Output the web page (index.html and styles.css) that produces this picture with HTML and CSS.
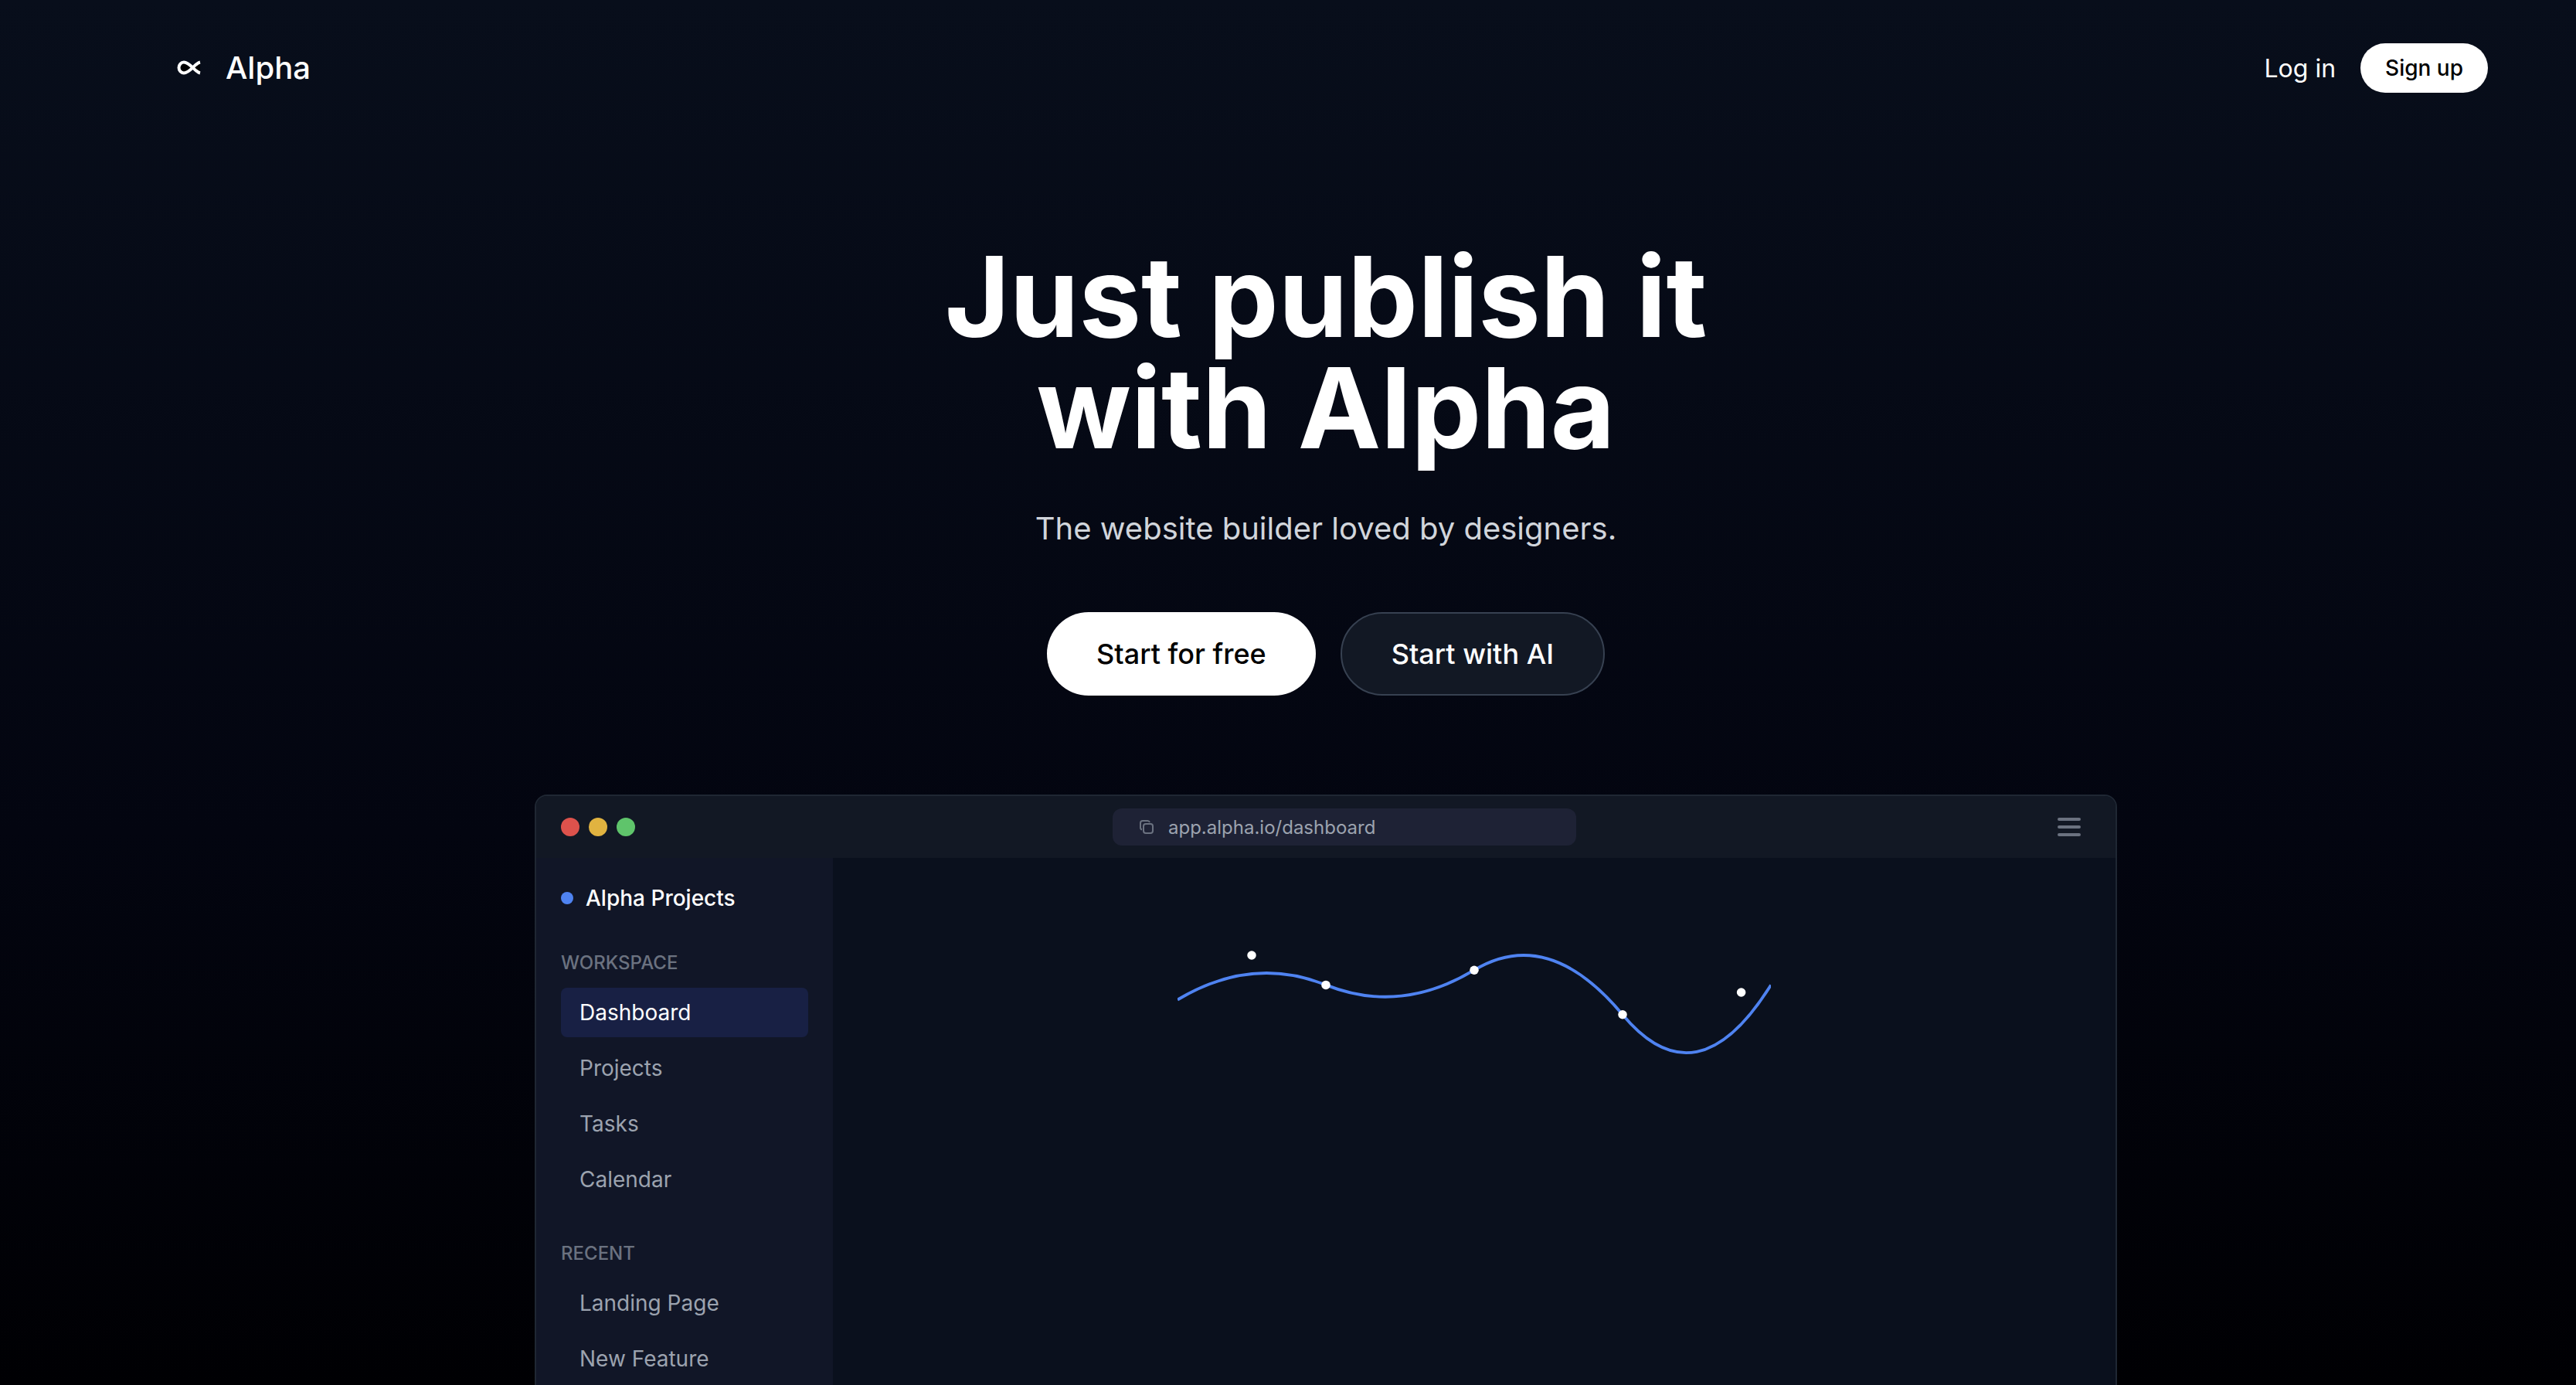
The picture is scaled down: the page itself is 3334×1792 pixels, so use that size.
FILE: index.html
```html
<!DOCTYPE html>
<html lang="en">
<head>
<meta charset="utf-8">
<title>Alpha</title>
<meta name="viewport" content="width=device-width, initial-scale=1">
<link rel="stylesheet" href="styles.css">
</head>
<body>
<div class="page">
  <header class="header">
    <a class="brand" href="#">
      <svg class="brand-icon" viewBox="0 0 64 64" aria-hidden="true"><path d="M47 24.500C40 26 34 38.500 26 38.500A6.500 7 0 0 1 26 24.500C34 24.500 40 37 47 38.500" fill="#000" stroke="#fff" stroke-width="4"/></svg>
      <span>Alpha</span>
    </a>
    <nav class="account">
      <a class="login" href="#">Log in</a>
      <button class="signup" type="button">Sign up</button>
    </nav>
  </header>
  <main>
    <section class="hero">
      <h1>Just publish it<br>with Alpha</h1>
      <p>The website builder loved by designers.</p>
      <div class="actions">
        <button class="action action-primary" type="button">Start for free</button>
        <button class="action action-secondary" type="button">Start with AI</button>
      </div>
    </section>
    <section class="window" aria-label="Dashboard preview">
      <div class="titlebar">
        <div class="lights"><span class="light red"></span><span class="light yellow"></span><span class="light green"></span></div>
        <div class="address">
          <svg class="copy-icon" viewBox="0 0 24 24" aria-hidden="true"><path d="M6 15.500a3 3 0 0 1-2-3V7a3 3 0 0 1 3-3h6a3 3 0 0 1 3 2"/><rect x="8" y="8" width="12" height="12" rx="3"/></svg>
          <span>app.alpha.io/dashboard</span>
        </div>
        <button class="menu" type="button" aria-label="Menu"><svg viewBox="0 0 40 40" aria-hidden="true"><path d="M7 10h26M7 20h26M7 30h26"/></svg></button>
      </div>
      <div class="workspace">
        <aside class="sidebar">
          <div class="project"><span class="project-dot"></span>Alpha Projects</div>
          <nav class="group">
            <h2>WORKSPACE</h2>
            <a class="item active" href="#">Dashboard</a>
            <a class="item" href="#">Projects</a>
            <a class="item" href="#">Tasks</a>
            <a class="item" href="#">Calendar</a>
          </nav>
          <nav class="group">
            <h2>RECENT</h2>
            <a class="item" href="#">Landing Page</a>
            <a class="item" href="#">New Feature</a>
          </nav>
        </aside>
        <div class="canvas">
          <svg class="chart" viewBox="0 0 400 200" role="img" aria-label="Activity trend">
            <path d="M0 80Q50 50 100 70T200 60T300 90T400 70" fill="none" stroke="#4f83f1" stroke-width="2"/>
            <g fill="#fff"><circle cx="50" cy="50" r="3"/><circle cx="100" cy="70" r="3"/><circle cx="200" cy="60" r="3"/><circle cx="300" cy="90" r="3"/><circle cx="380" cy="75" r="3"/></g>
          </svg>
        </div>
      </div>
    </section>
  </main>
</div>
</body>
</html>
```

FILE: styles.css
```css
* { box-sizing: border-box; }
body {
  margin: 0;
  background: #000;
  color: #fff;
  font-family: Inter, "Liberation Sans", sans-serif;
}
a { color: inherit; text-decoration: none; }
button { font: inherit; cursor: pointer; }
.page {
  height: 100vh;
  overflow: hidden;
  padding-left: 98px;
  background: linear-gradient(#080e1b, #030510 60%, #000003);
}
.header {
  display: flex;
  align-items: center;
  justify-content: space-between;
  padding: 56px 114px 0;
}
.brand { display: flex; align-items: center; gap: 16px; font-size: 40px; line-height: 56px; font-weight: 500; }
.brand-icon { width: 64px; height: 64px; }
.account { display: flex; align-items: center; gap: 32px; font-size: 32px; }
.signup {
  height: 64px;
  padding: 0 32px;
  border: 0;
  border-radius: 32px;
  background: #fff;
  color: #000;
  font-size: 28px;
  font-weight: 500;
}
.hero { padding-top: 192px; text-align: center; }
.hero h1 { margin: 0; font-size: 144px; line-height: 144px; font-weight: 700; }
.hero p { margin: 56px 0 0; font-size: 40px; line-height: 56px; color: #d1d5db; }
.actions { display: flex; justify-content: center; gap: 32px; margin-top: 80px; }
.action { height: 108px; padding: 0 64px; border: 0; border-radius: 54px; font-size: 36px; font-weight: 500; }
.action-primary { background: #fff; color: #000; }
.action-secondary { background: #121824; color: #fff; border: 2px solid #374151; }
.window {
  max-width: 2048px;
  margin: 128px auto 0;
  border: 2px solid #1f2733;
  border-radius: 16px;
  overflow: hidden;
  background: #0a101d;
}
.titlebar {
  display: flex;
  align-items: center;
  justify-content: space-between;
  height: 80px;
  padding: 0 40px 0 32px;
  background: #121824;
}
.lights { display: flex; gap: 12px; }
.light { width: 24px; height: 24px; border-radius: 50%; }
.red { background: #dd524c; }
.yellow { background: #e1b340; }
.green { background: #5fc46b; }
.address {
  display: flex;
  align-items: center;
  gap: 16px;
  width: 600px;
  height: 48px;
  padding: 0 32px;
  border-radius: 12px;
  background: #1e2235;
  color: #9ca3af;
  font-size: 24px;
}
.copy-icon { width: 24px; height: 24px; fill: none; stroke: #6b7280; stroke-width: 2; }
.menu { width: 40px; height: 40px; padding: 0; border: 0; background: none; }
.menu svg { display: block; fill: none; stroke: #6b7280; stroke-width: 4; stroke-linecap: round; }
.workspace { display: flex; }
.sidebar { flex: 0 0 384px; padding: 32px; background: #111627; }
.project { display: flex; align-items: center; gap: 16px; font-size: 28px; line-height: 40px; font-weight: 500; }
.project-dot { width: 16px; height: 16px; border-radius: 50%; background: #4f83f1; }
.group { display: flex; flex-direction: column; gap: 8px; margin-top: 48px; }
.group h2 { margin: 0 0 8px; font-size: 24px; line-height: 32px; font-weight: 500; color: #6b7280; }
.item { padding: 12px 24px; border-radius: 8px; font-size: 28px; line-height: 40px; color: #9ca3af; }
.active { background: #182044; color: #fff; }
.canvas { flex: 1; padding: 30px 32px; }
.chart { display: block; width: 100%; max-width: 768px; margin: 0 auto; }
```
